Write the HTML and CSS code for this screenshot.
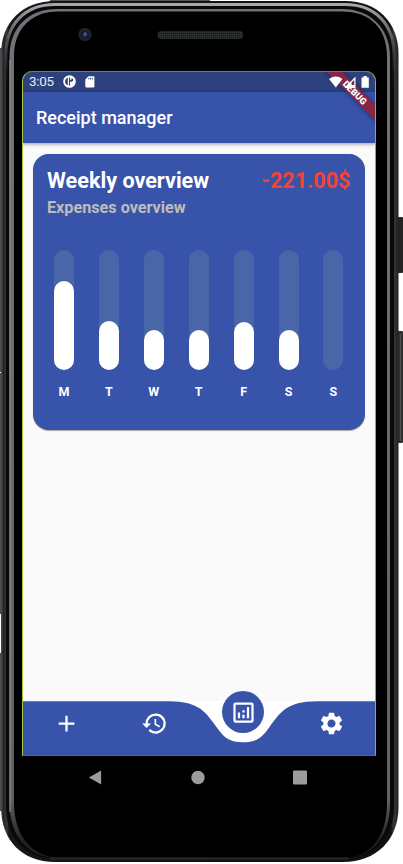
FILE: index.html
```html
<!DOCTYPE html>
<html lang="en">
<head>
<meta charset="utf-8">
<title>Receipt manager</title>
<link rel="stylesheet" href="styles.css">
</head>
<body>
<div class="device">
  <svg class="shell" viewBox="0 0 403 864" aria-hidden="true">
    <defs>
      <linearGradient id="rail" x1="0" x2="1" y1="0" y2="0">
        <stop offset="0" stop-color="#505050"/><stop offset=".006" stop-color="#242424"/>
        <stop offset=".015" stop-color="#383838"/><stop offset=".02" stop-color="#161616"/>
        <stop offset=".98" stop-color="#101010"/><stop offset=".988" stop-color="#383838"/><stop offset="1" stop-color="#202020"/>
      </linearGradient>
      <linearGradient id="shine" x1="0" x2="0" y1="0" y2="1">
        <stop offset="0" stop-color="#a6aaac"/><stop offset=".04" stop-color="#555"/><stop offset=".1" stop-color="#222" stop-opacity="0"/>
      </linearGradient>
      <linearGradient id="inner" x1="0" x2="0" y1="0" y2="1">
        <stop offset="0" stop-color="#70737a"/><stop offset=".93" stop-color="#606269"/><stop offset=".98" stop-color="#222"/><stop offset="1" stop-color="#202020"/>
      </linearGradient>
      <pattern id="mesh" width="2" height="2" patternUnits="userSpaceOnUse"><path d="M0 0h2v2H0z" fill="#202423"/><path d="M0 0h1v1H0z" fill="#303433"/></pattern>
    </defs>
    <path d="M0 48h2v324H0zM0 373h2v241H0zM0 653h2v158H0z" fill="#4b4b4b"/>
    <path d="M50 0h160v2H50z" fill="#555"/>
    <rect x="397" y="217" width="6" height="56" rx="1" fill="#242424"/>
    <rect x="397" y="331" width="6" height="112" rx="1" fill="#303030"/>
    <path d="M400.500 334v107" stroke="#505050"/>
    <path d="M55 1H345C377 1 398.500 22 398.500 54V807C398.500 840 376 862 343 862H55C22 862 1 840 1 807V54C1 22 23 1 55 1Z" fill="url(#rail)"/>
    <path d="M55 4.500H345C375 4.500 394 24 394 55V806C394 837 374 858.500 343 858.500H55C24 858.500 6 837 6 806V55C6 24 25 4.500 55 4.500Z" fill="#090909" stroke="url(#shine)" stroke-width="3"/>
    <path d="M57 9H342C370 9 390 28 390 57V803C390 836 373 858 342 858H58C28 858 9.500 836 9.500 803V56C9.500 27 29 9 57 9Z" fill="url(#inner)"/>
    <path d="M58 11.500H342C370 11.500 387 28 387 57V803C387 835 372 858 342 858H58C31 856 14 835 14 803V56C14 29 31 11.500 58 11.500Z" fill="#000"/>
    <path d="M10 60V812" stroke="#989a9e"/>
    <path d="M50 858.500H348" stroke="#242424" stroke-width="2.500"/>
    <circle cx="85" cy="34.500" r="6.700" fill="#202225"/><circle cx="85" cy="34.500" r="4" fill="#161a32"/><circle cx="85" cy="34.500" r="2.200" fill="#32457d"/><circle cx="85.500" cy="33.500" r=".7" fill="#6d83c0"/>
    <rect x="157.500" y="31" width="85.500" height="8" rx="3.500" fill="url(#mesh)"/>
  </svg>

  <main class="screen">
    <header class="status">
      <span class="clock">3:05</span>
      <svg class="notice" viewBox="0 0 13 13"><circle cx="6.500" cy="6.500" r="6.300" fill="#fff"/><path d="M4.800 2.600v7.800C2.700 9.500 2.100 8 2.100 6.500S2.900 3.400 4.800 2.600ZM6 2.500h1v2.200h1.500V3.300l1.700.8v1.700L8.500 6.700H7v3.800H6Z" fill="#2d417e"/></svg>
      <svg class="sd" viewBox="0 0 10 12"><path d="M3.500.3h5.100q.8 0 .8.800v9.500q0 .8-.8.800H1.100q-.8 0-.8-.8V3.500Z" fill="#fff"/><path d="M3.800 1.800v1.700M5.600 1.800v1.700M7.400 1.800v1.700" stroke="#2d417e" stroke-width=".9"/></svg>
    </header>
    <div class="appbar"><h1>Receipt manager</h1></div>

    <div class="content">
      <section class="card">
        <div class="heading"><h2>Weekly overview</h2><strong>-221.00$</strong></div>
        <p class="subtitle">Expenses overview</p>
        <div class="chart">
          <div class="day"><div class="track"><div class="fill" style="height:89px"></div></div><span>M</span></div>
          <div class="day"><div class="track"><div class="fill" style="height:49px"></div></div><span>T</span></div>
          <div class="day"><div class="track"><div class="fill" style="height:40px"></div></div><span>W</span></div>
          <div class="day"><div class="track"><div class="fill" style="height:40px"></div></div><span>T</span></div>
          <div class="day"><div class="track"><div class="fill" style="height:48px"></div></div><span>F</span></div>
          <div class="day"><div class="track"><div class="fill" style="height:40px"></div></div><span>S</span></div>
          <div class="day"><div class="track"></div><span>S</span></div>
        </div>
      </section>
    </div>

    <nav class="tabs">
      <svg class="wave" viewBox="0 0 354 55"><path d="M0 .3H147C178 .3 184 12 194.500 26C202 37 208 41.300 221 41.300S240 37 247.500 26C258 12 264 .3 295 .3H354V55H0Z" fill="#3853aa"/></svg>
      <div class="tab"><svg viewBox="0 0 24 24"><path d="M19 13h-6v6h-2v-6H5v-2h6V5h2v6h6z"/></svg></div>
      <div class="tab"><svg viewBox="0 0 24 24"><path d="M13 3a9 9 0 0 0-9 9H1l3.890 3.890.07.14L9 12H6a7 7 0 1 1 7 7 6.970 6.970 0 0 1-4.940-2.060l-1.420 1.420A9 9 0 1 0 13 3zm-1 5v5l4.280 2.540.72-1.210-3.500-2.080V8z"/></svg></div>
      <div class="tab"><div class="active"><svg viewBox="0 0 24 24"><path d="M19 3H5a2 2 0 0 0-2 2v14c0 1.100.9 2 2 2h14a2 2 0 0 0 2-2V5a2 2 0 0 0-2-2zm0 16H5V5h14v14zM7 12h2v5H7zM15 7h2v10h-2zM11 14h2v3h-2zM11 10h2v2h-2z"/></svg></div></div>
      <div class="tab"><svg viewBox="0 0 24 24"><path d="M19.140 12.940c.04-.3.060-.61.060-.94s-.02-.64-.07-.94l2.030-1.580a.49.490 0 0 0 .12-.61l-1.920-3.320a.488.488 0 0 0-.59-.22l-2.390.96c-.5-.38-1.030-.7-1.620-.94l-.36-2.540a.484.484 0 0 0-.48-.41h-3.840c-.24 0-.43.170-.47.410l-.36 2.540c-.59.240-1.130.57-1.620.94l-2.390-.96c-.22-.08-.47 0-.59.220L2.740 8.870c-.12.210-.08.470.12.610l2.030 1.580c-.05.300-.09.630-.09.940s.02.640.07.940l-2.030 1.580a.49.490 0 0 0-.12.610l1.920 3.320c.12.220.37.290.59.220l2.390-.96c.5.380 1.030.7 1.620.94l.36 2.540c.05.240.24.410.48.410h3.840c.24 0 .44-.17.47-.41l.36-2.540c.59-.24 1.130-.56 1.620-.94l2.390.96c.22.080.47 0 .59-.22l1.920-3.320c.12-.22.070-.47-.12-.61zM12 15.600A3.610 3.610 0 0 1 8.400 12c0-1.980 1.620-3.600 3.600-3.600s3.600 1.620 3.600 3.600-1.620 3.600-3.600 3.600z"/></svg></div>
    </nav>
    <div class="ribbon"><span>DEBUG</span></div>
    <svg class="signals" viewBox="0 0 41 13"><path d="M0 3Q6.800-1.900 13.500 3L6.800 11.600Z"/><path d="M26.500.5V12H15.400ZM25.200 4v5h-2.700V6.500Z" fill-rule="evenodd"/><path d="M34.500.1h3.300v1.400h2v10.200h-7.300V1.500h2Z"/></svg>
    <div class="outline"></div>
  </main>

  <footer class="system">
    <svg viewBox="0 0 14 16"><path d="M13.500.5v15L.5 8Z"/></svg>
    <svg viewBox="0 0 14 14"><circle cx="7" cy="7" r="6.700"/></svg>
    <svg viewBox="0 0 14 14"><rect width="14" height="14" rx="1"/></svg>
  </footer>
</div>
</body>
</html>
```

FILE: styles.css
```css
* { box-sizing: border-box; }
body { margin: 0; background: #fff; font-family: Roboto, sans-serif; overflow: hidden; }
.device { position: relative; width: 403px; height: 864px; padding: 71px 0 0 22px; }
.shell { position: absolute; inset: 0; width: 403px; height: 864px; }
.screen {
  position: relative; display: flex; flex-direction: column;
  width: 354px; height: 685px; overflow: hidden;
  border-radius: 10px 10px 0 0; background: #fafafa; color: #fff;
}
.status { display: flex; align-items: center; height: 21px; padding-left: 7px; background: #2d417e; }
.clock { width: 34px; font-size: 13.500px; line-height: 21px; letter-spacing: -.35px; color: #e5e8f0; }
.notice { width: 13px; height: 13px; }
.sd { width: 10px; height: 12px; margin-left: 8.500px; }
.appbar {
  display: flex; align-items: center; height: 50.500px; padding: 2px 0 0 14px;
  background: #3853aa; box-shadow: 0 1px 4px #0006; z-index: 1; flex: none;
}
h1, h2, p { margin: 0; }
h1 { font-size: 18px; line-height: 22px; font-weight: 500; }
.content { flex: 1; padding: 11px 11px 0 10.500px; }
.card {
  height: 276px; padding: 15px 14.500px 0; border-radius: 16px;
  background: #3853aa; box-shadow: 0 .5px 1px #0005;
}
.heading { display: flex; justify-content: space-between; align-items: center; height: 24px; }
h2, .heading strong { font-size: 21.600px; line-height: 24px; font-weight: 700; white-space: nowrap; }
.heading strong { color: #f44336; }
.subtitle { height: 20px; margin-top: 5px; font-size: 16.200px; line-height: 20px; font-weight: 700; color: #bdbdbd; }
.chart { display: flex; justify-content: space-between; margin: 32.500px 7px 0; }
.day { display: flex; flex-direction: column; align-items: center; width: 20px; }
.track { display: flex; align-items: flex-end; width: 20px; height: 120px; border-radius: 10px; background: #4966a9; }
.fill { width: 20px; border-radius: 10px; background: #fff; }
.day span { margin-top: 14px; font-size: 12.500px; line-height: 16px; font-weight: 700; }
.tabs { position: relative; display: grid; grid-template-columns: repeat(4, 1fr); height: 55px; background: #fff; }
.wave { position: absolute; top: 0; left: 0; width: 354px; height: 55px; }
.tab { position: relative; display: flex; justify-content: center; align-items: center; height: 45px; }
.tab svg { width: 27px; height: 27px; fill: #fff; }
.active {
  position: absolute; top: -10px; left: 23px; display: flex; align-items: center; justify-content: center;
  width: 42px; height: 42px; border-radius: 50%; background: #3853aa;
}
.ribbon {
  position: absolute; top: 15.900px; right: -23.600px; width: 90px; height: 11px;
  transform: rotate(45deg); background: #842744; box-shadow: 0 0 5px #0007;
  text-align: center; font-size: 9.200px; line-height: 11px; font-weight: 900; z-index: 2;
}
.signals { position: absolute; top: 4.500px; left: 307px; width: 41px; height: 13px; fill: #fff; z-index: 3; }
.outline {
  position: absolute; inset: 0; border: 1px solid #648d2b; border-left-color: #a4c63c;
  border-right-color: #8db34b; border-bottom-color: #4f7c22; border-radius: 10px 10px 0 0; z-index: 4;
}
.system {
  position: relative; display: flex; justify-content: space-between; align-items: center;
  width: 219px; height: 16px; margin: 13px 0 0 66px;
}
.system svg { width: 14px; height: 15px; fill: #9b9b9b; }
```
